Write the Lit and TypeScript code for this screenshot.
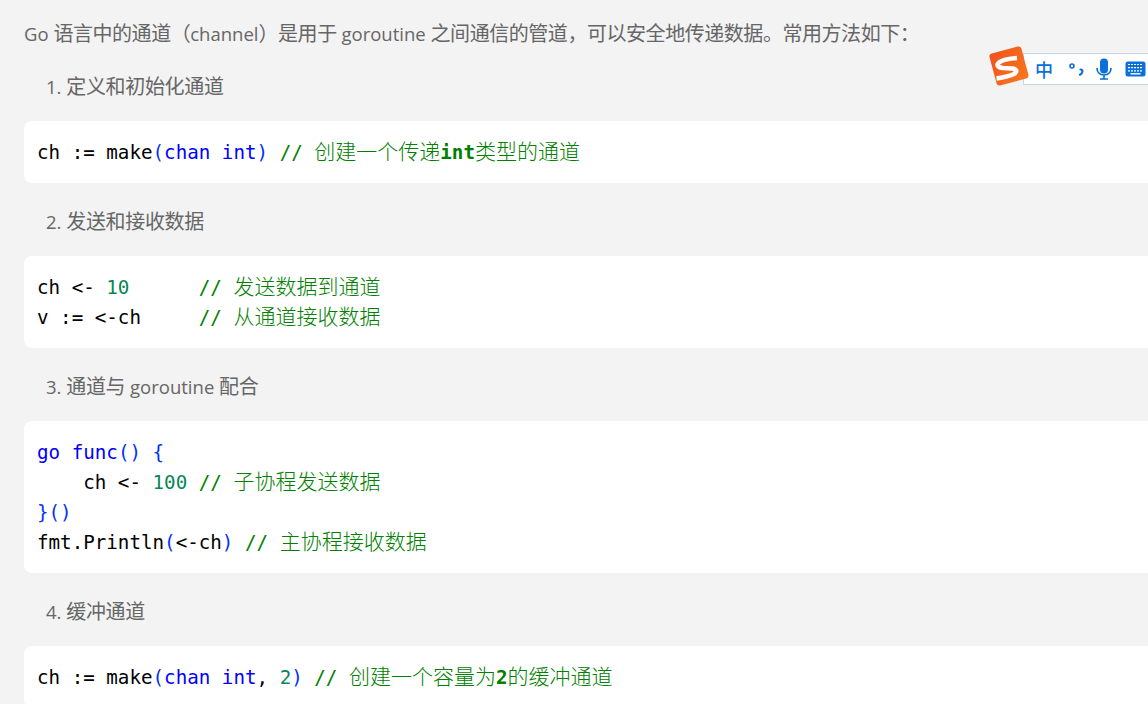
import { LitElement, html, css } from "lit";
import { customElement } from "lit/decorators.js";

@customElement("app-root")
export class AppRoot extends LitElement {
  static styles = css`
    :host {
      display: block;
      position: relative;
      width: 1148px;
      height: 704px;
      overflow: hidden;
      background: #f3f3f3;
      color: #666;
      font-family: "Open Sans", "Noto Sans CJK SC", sans-serif;
      font-size: 20px;
    }
    .page { padding: 19px 0 0 24px; }
    .lead { margin: 0; height: 30px; line-height: 30px; letter-spacing: -0.45px; }
    .item { margin: 0; padding: 0 0 0 22px; height: 30px; line-height: 30px; letter-spacing: -0.33px; }
    .item.first { margin-top: 23px; }
    .en { font-size: 18.5px; letter-spacing: 0; }
    pre {
      margin: 19px -12px 24px 0;
      padding: 17px 13px 15px;
      background: #fff;
      border-radius: 8px;
      font-family: "DejaVu Sans Mono", "Noto Sans CJK SC", monospace;
      font-size: 19.2px;
      line-height: 30px;
      color: #000;
      height: 30px;
      box-sizing: content-box;
    }
    pre.l2 { height: 60px; }
    pre.l4 { height: 120px; }
    .b { color: #0000ff; }
    .p { color: #0431fa; }
    .n { color: #098658; }
    .c { color: #008000; }
    .c b { font-weight: 700; }
    .zh { font-family: "Noto Sans CJK SC", sans-serif; font-size: 21px; font-weight: 300; line-height: 1; }
    .ime {
      position: absolute;
      left: 1023px;
      top: 53px;
      width: 125px;
      height: 32px;
      box-sizing: border-box;
      background: #fff;
      border: 1px solid #c4d5e6;
      border-right: 0;
      display: flex;
      align-items: center;
    }
    .ime-zh {
      font-family: "Noto Sans CJK SC", sans-serif;
      font-size: 18px;
      font-weight: 500;
      line-height: 1;
      margin-left: 11px;
      color: #0a6fd8;
    }
    .ime svg { display: block; flex: none; }
    .punct { margin-left: 13px; }
    .mic { margin-left: 9px; }
    .kbd { margin-left: 12px; }
    .logo { position: absolute; left: 985px; top: 44px; }
  `;

  render() {
    return html`
      <div class="page">
        <p class="lead"><span class="en">Go </span>语言中的通道（<span class="en">channel</span>）是用于<span class="en"> goroutine </span>之间通信的管道，可以安全地传递数据。常用方法如下：</p>
        <p class="item first"><span class="en">1. </span>定义和初始化通道</p>
        <pre><span>ch := make</span><span class="p">(</span><span class="b">chan int</span><span class="p">)</span> <span class="c">// <span class="zh">创建一个传递</span><b>int</b><span class="zh">类型的通道</span></span></pre>
        <p class="item"><span class="en">2. </span>发送和接收数据</p>
        <pre class="l2">ch &lt;- <span class="n">10</span>      <span class="c">// <span class="zh">发送数据到通道</span></span>
v := &lt;-ch     <span class="c">// <span class="zh">从通道接收数据</span></span></pre>
        <p class="item"><span class="en">3. </span>通道与<span class="en"> goroutine </span>配合</p>
        <pre class="l4"><span class="b">go func</span><span class="p">() {</span>
    ch &lt;- <span class="n">100</span> <span class="c">// <span class="zh">子协程发送数据</span></span>
<span class="p">}()</span>
fmt.Println<span class="p">(</span>&lt;-ch<span class="p">)</span> <span class="c">// <span class="zh">主协程接收数据</span></span></pre>
        <p class="item"><span class="en">4. </span>缓冲通道</p>
        <pre>ch := make<span class="p">(</span><span class="b">chan int</span>, <span class="n">2</span><span class="p">)</span> <span class="c">// <span class="zh">创建一个容量为</span><b>2</b><span class="zh">的缓冲通道</span></span></pre>
      </div>
      <div class="ime">
        <span class="ime-zh">中</span>
        <svg class="punct" width="20" height="22" viewBox="0 0 20 22"><circle cx="6" cy="8" r="2" fill="#fff" stroke="#0a6fd8" stroke-width="1.6"/><path d="M14.5 11.5c1.4 0 2 .9 1.9 2-.1 1.4-1 2.5-2.4 3.2" fill="none" stroke="#0a6fd8" stroke-width="2.2" stroke-linecap="round"/></svg>
        <svg class="mic" width="18" height="22" viewBox="0 0 18 22"><rect x="5" y="0.5" width="8" height="15" rx="4" fill="#0a6fd8"/><path d="M2 10c0 4.5 3 7 7 7s7-2.5 7-7M9 17v3.5M5 21h8" fill="none" stroke="#0a6fd8" stroke-width="1.7"/></svg>
        <svg class="kbd" width="21" height="16" viewBox="0 0 21 16"><rect x="0.5" y="0.5" width="20" height="15" rx="2.5" fill="#0a6fd8"/><path d="M3 3.5h15M3 6.7h15M3 9.9h15" stroke="#fff" stroke-width="1.2" stroke-dasharray="2 1"/><path d="M5.5 12.8h10" stroke="#fff" stroke-width="1.4"/></svg>
      </div>
      <svg class="logo" width="50" height="44" viewBox="0 0 50 44">
        <defs><linearGradient id="lg" x1="0" y1="0" x2="1" y2="1"><stop offset="0" stop-color="#f2511b"/><stop offset="1" stop-color="#f7791f"/></linearGradient></defs>
        <rect x="7.5" y="5.5" width="33" height="33" rx="3" fill="url(#lg)" transform="rotate(-15 24 22)"/>
        <path d="M32 14C24 14.5 17 16 14 18.5C11 21 13 23.5 18 24L27 24.5C32 25 32.5 28 29 30C25 32 18 33.5 11.5 34.5" fill="none" stroke="#fff" stroke-width="4.6"/>
      </svg>
    `;
  }
}
